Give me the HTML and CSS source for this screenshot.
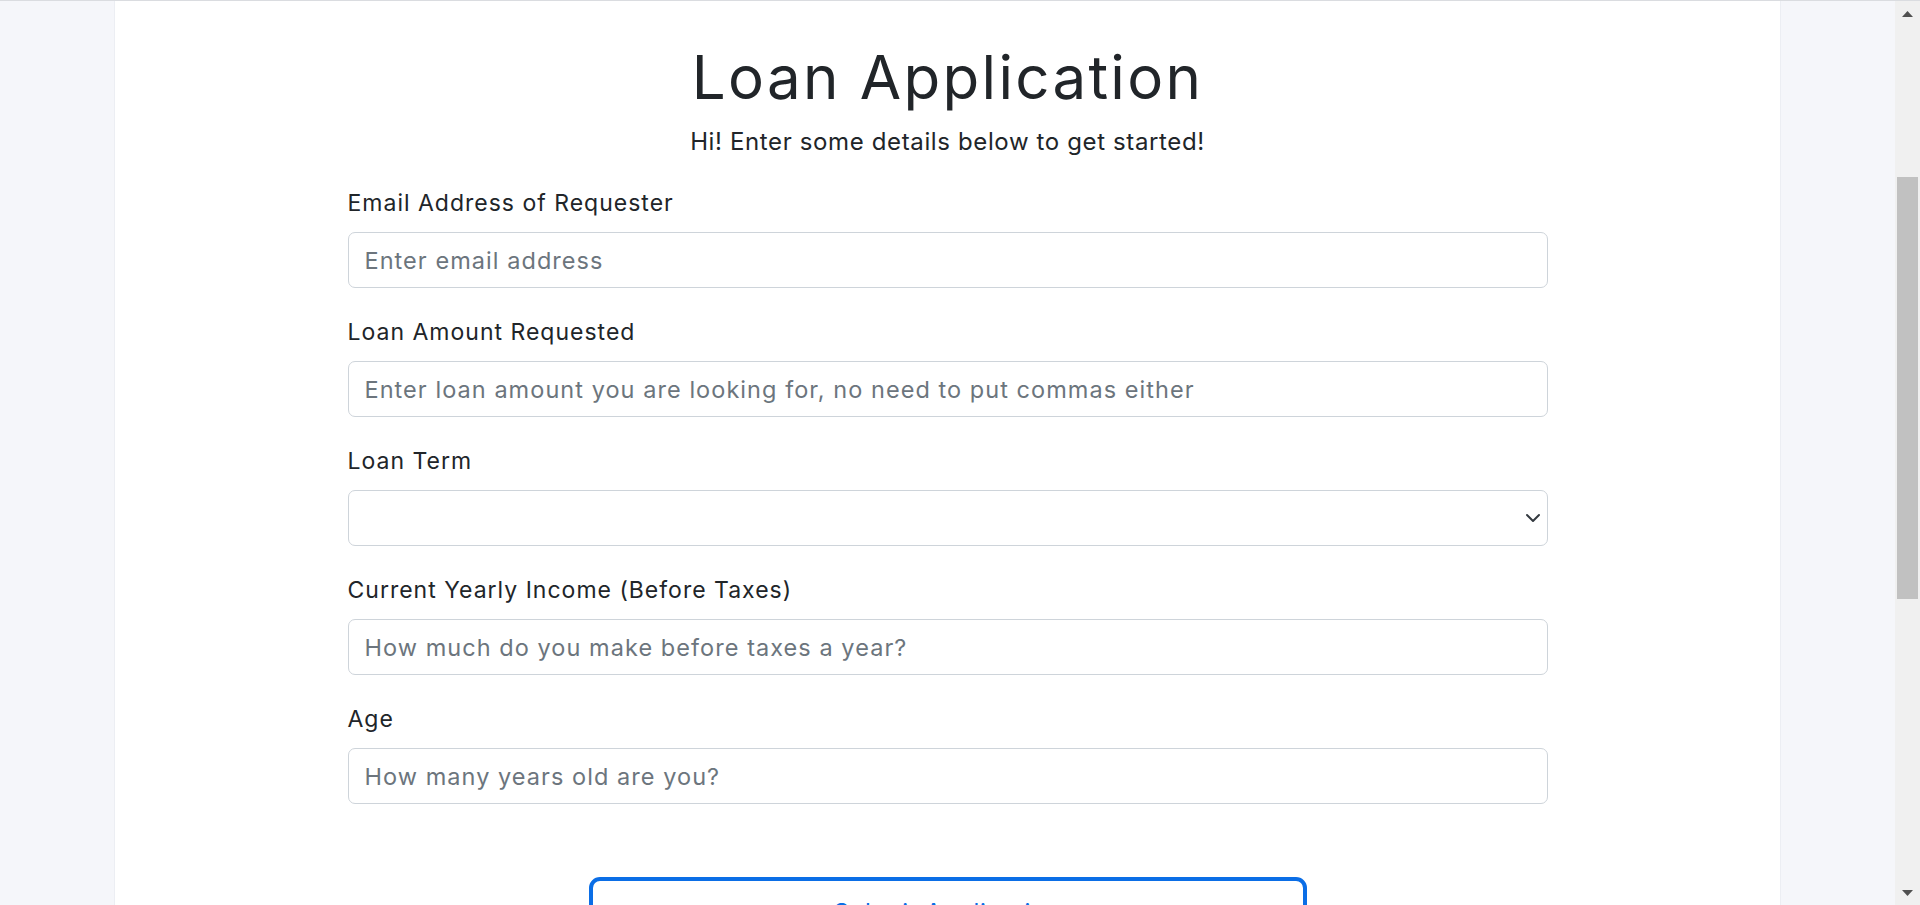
FILE: index.html
```html
<!DOCTYPE html>
<html lang="en">
<head>
<meta charset="utf-8">
<title>Loan Application</title>
<link rel="stylesheet" href="styles.css">
</head>
<body>
<div class="viewport">
  <div class="page">
    <main class="card">
      <h1 class="title">Loan Application</h1>
      <p class="subtitle">Hi! Enter some details below to get started!</p>
      <form class="form">
        <div class="field">
          <label class="label" for="email">Email Address of Requester</label>
          <input class="control" id="email" type="email" placeholder="Enter email address">
        </div>
        <div class="field">
          <label class="label" for="amount">Loan Amount Requested</label>
          <input class="control" id="amount" type="text" placeholder="Enter loan amount you are looking for, no need to put commas either">
        </div>
        <div class="field">
          <label class="label" for="term">Loan Term</label>
          <div class="select-wrap">
            <select class="control select" id="term">
              <option value=""></option>
              <option>12 months</option>
              <option>24 months</option>
              <option>36 months</option>
            </select>
            <svg class="chevron" width="16" height="12" viewBox="0 0 16 12" aria-hidden="true"><path d="M2 3l6 6 6-6" fill="none" stroke="#343a40" stroke-width="2" stroke-linecap="round" stroke-linejoin="round"/></svg>
          </div>
        </div>
        <div class="field">
          <label class="label" for="income">Current Yearly Income (Before Taxes)</label>
          <input class="control" id="income" type="text" placeholder="How much do you make before taxes a year?">
        </div>
        <div class="field">
          <label class="label" for="age">Age</label>
          <input class="control" id="age" type="text" placeholder="How many years old are you?">
        </div>
        <div class="actions">
          <button class="submit" type="button">Submit Application</button>
        </div>
      </form>
    </main>
  </div>
  <div class="scrollbar" aria-hidden="true">
    <div class="sb-btn sb-up"><svg width="11" height="6" viewBox="0 0 11 6"><path d="M5.5 0L11 6H0z" fill="#505050"/></svg></div>
    <div class="sb-track"><div class="sb-thumb"></div></div>
    <div class="sb-btn sb-down"><svg width="11" height="6" viewBox="0 0 11 6"><path d="M0 0h11L5.5 6z" fill="#505050"/></svg></div>
  </div>
</div>
</body>
</html>
```
FILE: styles.css
```css
* { box-sizing: border-box; }

html, body {
  margin: 0;
  padding: 0;
  height: 100%;
  overflow: hidden;
}

body {
  font-family: Inter, "Open Sans", sans-serif;
  color: #212529;
  background: #f5f6fa;
}

.viewport {
  display: flex;
  height: 905px;
  border-top: 1px solid #dadce0;
}

.page {
  flex: 1;
  padding: 0 114px;
  overflow: hidden;
}

.card {
  background: #ffffff;
  border-left: 1px solid #eceef3;
  border-right: 1px solid #eceef3;
  height: 100%;
  padding-top: 40px;
  display: flex;
  flex-direction: column;
  align-items: center;
}

.title {
  margin: 0;
  font-size: 60px;
  line-height: 72px;
  font-weight: 400;
  letter-spacing: 2.3px;
}

.subtitle {
  margin: 14px 0 0;
  font-size: 24px;
  line-height: 30px;
  letter-spacing: 0.63px;
}

.form {
  width: 1200px;
  margin-top: 32px;
}

.field {
  margin-bottom: 30px;
}

.label {
  display: block;
  font-size: 23px;
  line-height: 28px;
  margin-bottom: 15px;
  letter-spacing: 1px;
}

.control {
  display: block;
  width: 100%;
  height: 56px;
  padding: 0 16px;
  border: 1px solid #ced4da;
  border-radius: 7px;
  background: #ffffff;
  font-family: inherit;
  font-size: 23.5px;
  color: #212529;
  letter-spacing: 1.05px;
}

.control::placeholder {
  color: #6c757d;
  opacity: 1;
}

.select-wrap {
  position: relative;
}

.select {
  appearance: none;
  -webkit-appearance: none;
}

.chevron {
  position: absolute;
  right: 7px;
  top: 50%;
  margin-top: -6px;
  pointer-events: none;
}

.actions {
  display: flex;
  justify-content: center;
  margin-top: 73px;
}

.submit {
  width: 718px;
  padding: 17px 0 19px;
  line-height: 30px;
  border: 4px solid #0b6ee6;
  border-radius: 11px;
  background: #ffffff;
  color: #0b6ee6;
  font-family: inherit;
  font-size: 24px;
  letter-spacing: 0.8px;
}

.scrollbar {
  width: 25px;
  flex: none;
  background: #f0f0f0;
  display: flex;
  flex-direction: column;
}

.sb-btn {
  height: 24px;
  display: flex;
  justify-content: center;
  flex: none;
}

.sb-up { align-items: flex-start; padding-top: 10px; }
.sb-down { align-items: flex-end; padding-bottom: 9px; }

.sb-track {
  flex: 1;
  padding: 0 2px;
}

.sb-thumb {
  margin-top: 152px;
  height: 422px;
  background: #c1c1c1;
}
```
